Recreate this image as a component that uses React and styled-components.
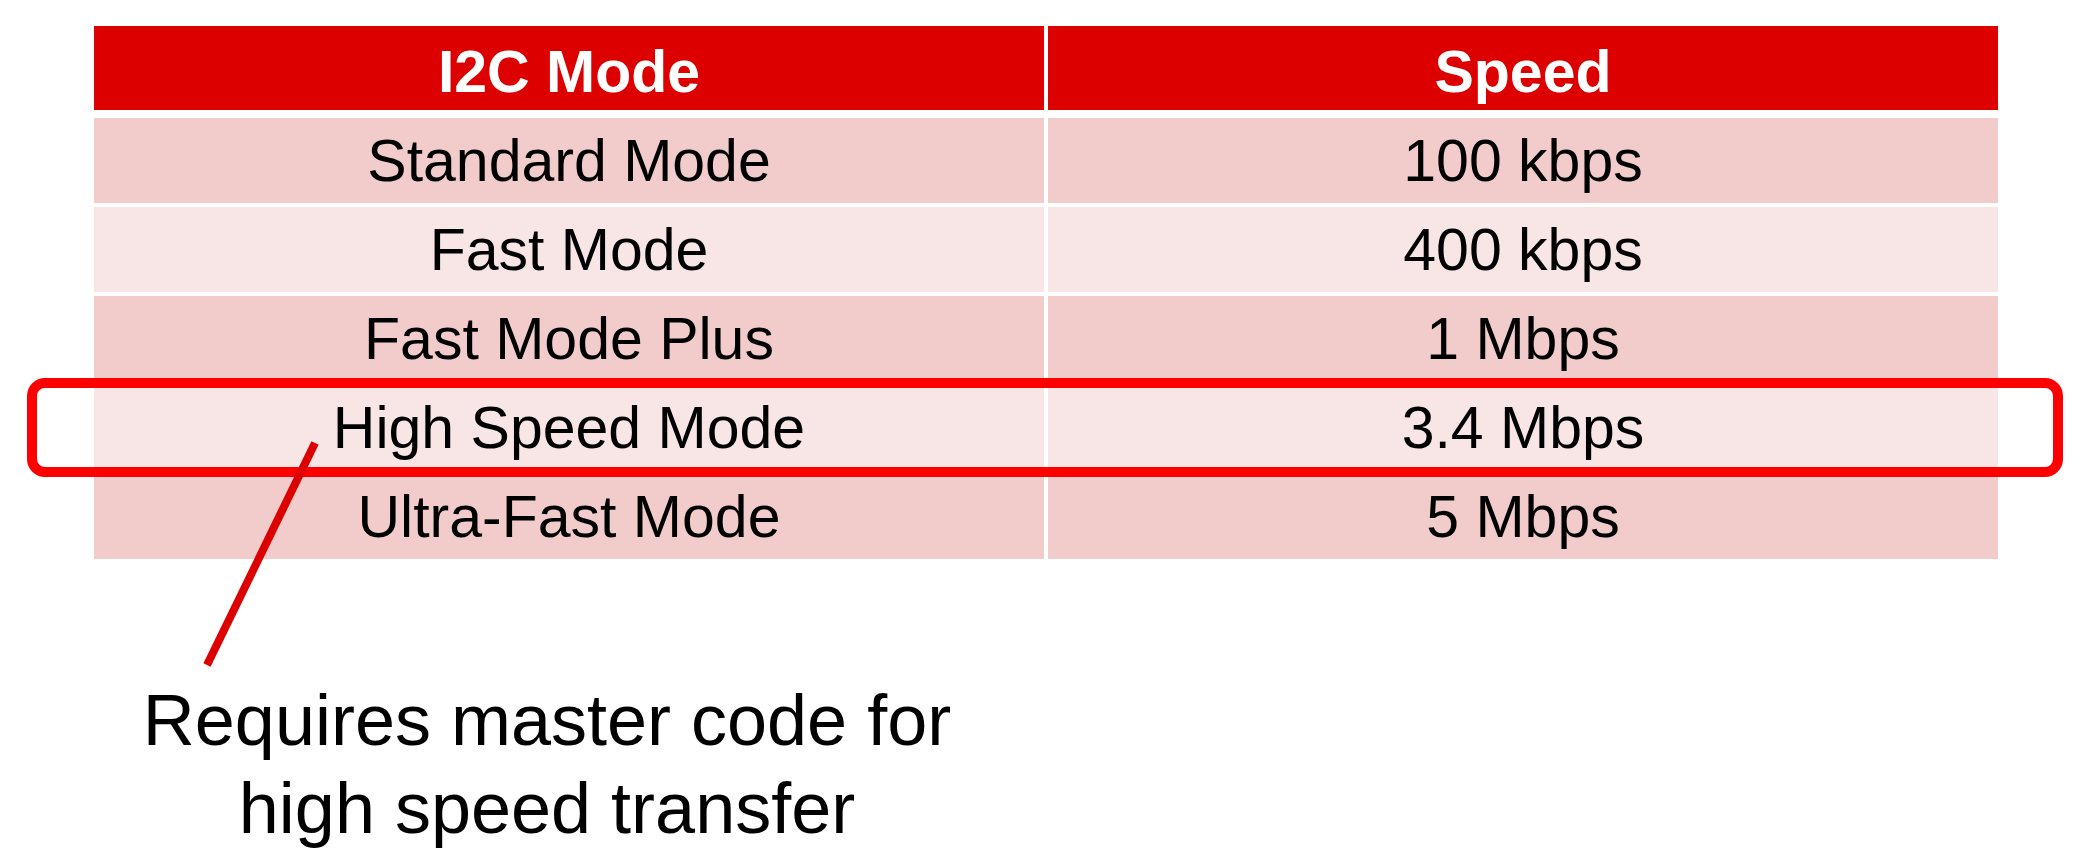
import React from "react";
import styled, { createGlobalStyle } from "styled-components";

const GlobalStyle = createGlobalStyle`
  html, body {
    margin: 0;
    padding: 0;
    background: #ffffff;
  }
  body {
    font-family: "Liberation Sans", Arial, sans-serif;
  }
`;

const Page = styled.div`
  position: relative;
  width: 2087px;
  height: 866px;
  box-sizing: border-box;
  padding: 26px 0 0 94px;
  background: #ffffff;
  overflow: hidden;
`;

const Table = styled.div`
  display: flex;
  flex-direction: column;
  gap: 4px;
  width: 1904px;
`;

const Row = styled.div`
  display: grid;
  grid-template-columns: 950px 950px;
  column-gap: 4px;
  height: ${(p) => (p.$header ? "84px" : "85px")};
  margin-bottom: ${(p) => (p.$header ? "4px" : "0")};
`;

const Cell = styled.div`
  display: flex;
  align-items: center;
  justify-content: center;
  box-sizing: border-box;
  background: ${(p) =>
    p.$header ? "#dd0000" : p.$alt ? "#f8e6e6" : "#f2cbcb"};
  color: ${(p) => (p.$header ? "#ffffff" : "#000000")};
  font-family: "Liberation Sans", Arial, sans-serif;
  font-size: 59px;
  font-weight: ${(p) => (p.$header ? 700 : 400)};
  padding-top: ${(p) => (p.$header ? "7px" : "0")};
  white-space: pre;
`;

const Note = styled.div`
  width: 906px;
  margin-top: 117px;
  text-align: center;
  font-family: "Liberation Sans", Arial, sans-serif;
  font-size: 72px;
  line-height: 88px;
  color: #000000;
`;

const Highlight = styled.div`
  position: absolute;
  left: 27px;
  top: 378px;
  width: 2036px;
  height: 99px;
  box-sizing: border-box;
  border: 10px solid #ff0000;
  border-radius: 18px;
  pointer-events: none;
`;

const Pointer = styled.svg`
  position: absolute;
  left: 0;
  top: 0;
  width: 2087px;
  height: 866px;
  pointer-events: none;
`;

const rows = [
  ["Standard Mode", "100 kbps"],
  ["Fast Mode", "400 kbps"],
  ["Fast Mode Plus", "1 Mbps"],
  ["High Speed Mode", "3.4 Mbps"],
  ["Ultra-Fast Mode", "5 Mbps"],
];

export default function App() {
  return (
    <>
      <GlobalStyle />
      <Page>
        <Table>
          <Row $header>
            <Cell $header>I2C Mode</Cell>
            <Cell $header>Speed</Cell>
          </Row>
          {rows.map(([mode, speed], i) => (
            <Row key={mode}>
              <Cell $alt={i % 2 === 1}>{mode}</Cell>
              <Cell $alt={i % 2 === 1}>{speed}</Cell>
            </Row>
          ))}
        </Table>
        <Note>
          Requires master code for
          <br />
          high speed transfer
        </Note>
        <Highlight />
        <Pointer viewBox="0 0 2087 866">
          <line
            x1="315"
            y1="443"
            x2="207"
            y2="665"
            stroke="#dd0000"
            strokeWidth="8"
            strokeLinecap="butt"
          />
        </Pointer>
      </Page>
    </>
  );
}
